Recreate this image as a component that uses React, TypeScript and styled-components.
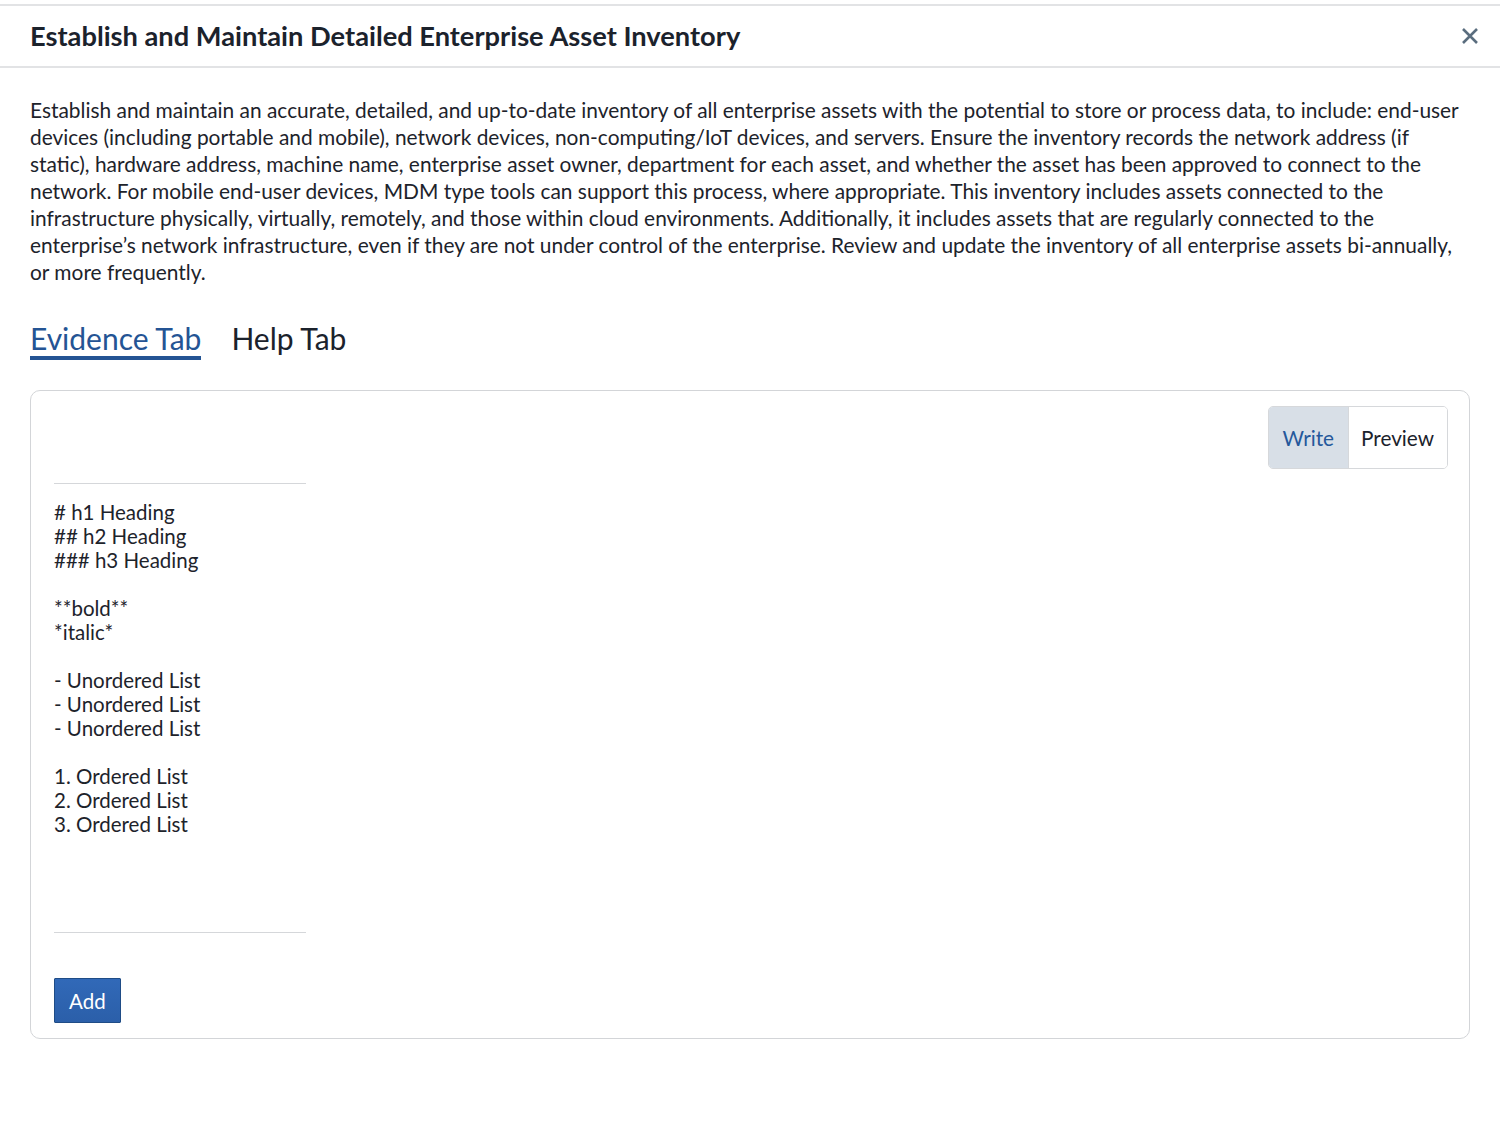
import React, { useState } from 'react';
import styled, { createGlobalStyle } from 'styled-components';

const GlobalStyle = createGlobalStyle`
  html, body {
    margin: 0;
    padding: 0;
    background: #ffffff;
  }
  body {
    font-family: Lato, 'Open Sans', 'Liberation Sans', sans-serif;
    color: #1d232b;
  }
`;

const Page = styled.div`
  width: 1500px;
  padding-top: 4px;
  display: flex;
  flex-direction: column;
`;

const Header = styled.div`
  height: 60px;
  border-top: 2px solid #e2e3e5;
  border-bottom: 2px solid #e2e3e5;
  display: flex;
  align-items: center;
  justify-content: space-between;
  padding: 0 20px 0 30px;
`;

const Title = styled.h1`
  margin: 0 0 2px;
  font-size: 27.25px;
  font-weight: 700;
  color: #1b222c;
`;

const CloseButton = styled.button`
  border: 0;
  background: none;
  padding: 0;
  width: 20px;
  height: 20px;
  display: flex;
  align-items: center;
  justify-content: center;
  cursor: pointer;
`;

const Body = styled.div`
  padding: 28px 30px 0;
`;

const Description = styled.p`
  margin: 0;
  font-size: 20.9px;
  line-height: 27px;
  color: #1d232b;
`;

const TabBar = styled.div`
  display: flex;
  gap: 30px;
  margin-top: 35px;
`;

const Tab = styled.button<{ active: boolean }>`
  border: 0;
  background: none;
  padding: 0;
  font-family: inherit;
  font-size: 30px;
  line-height: 36px;
  color: ${(p) => (p.active ? '#245494' : '#1b222c')};
  border-bottom: 4px solid ${(p) => (p.active ? '#245494' : 'transparent')};
  cursor: pointer;
`;

const Card = styled.div`
  margin-top: 30px;
  border: 1px solid #d3d5d8;
  border-radius: 10px;
  padding: 15px 21px 15px 23px;
  display: flex;
  flex-direction: column;
`;

const ModeSwitch = styled.div`
  align-self: flex-end;
  display: flex;
  height: 61px;
  border: 1px solid #d6d8db;
  border-radius: 5px;
  overflow: hidden;
`;

const ModeButton = styled.button<{ active: boolean }>`
  border: 0;
  font-family: inherit;
  font-size: 20.75px;
  padding: 0 ${(p) => (p.active ? 14 : 13)}px 0 ${(p) => (p.active ? 14 : 12)}px;
  background: ${(p) => (p.active ? '#d8dfe7' : '#ffffff')};
  color: ${(p) => (p.active ? '#25589b' : '#1b222c')};
  border-right: ${(p) => (p.active ? '1px solid #d6d8db' : '0')};
  cursor: pointer;
`;

const Editor = styled.textarea`
  margin-top: 14px;
  width: 252px;
  height: 450px;
  box-sizing: border-box;
  border: 0;
  border-top: 1px solid #d5d7da;
  border-bottom: 1px solid #d5d7da;
  padding: 16px 0 0;
  resize: none;
  outline: none;
  font-family: inherit;
  font-size: 20.5px;
  line-height: 24px;
  color: #1d232b;
  overflow: hidden;
`;

const AddButton = styled.button`
  align-self: flex-start;
  margin-top: 45px;
  height: 45px;
  padding: 0 14px;
  border: 1px solid #1f4c86;
  border-radius: 1px;
  background: linear-gradient(#3169b8, #2b5fa9);
  color: #ffffff;
  font-family: inherit;
  font-size: 20.5px;
  cursor: pointer;
`;

const description =
  'Establish and maintain an accurate, detailed, and up-to-date inventory of all enterprise assets with the potential to store or process data, to include: end-user devices (including portable and mobile), network devices, non-computing/IoT devices, and servers. Ensure the inventory records the network address (if static), hardware address, machine name, enterprise asset owner, department for each asset, and whether the asset has been approved to connect to the network. For mobile end-user devices, MDM type tools can support this process, where appropriate. This inventory includes assets connected to the infrastructure physically, virtually, remotely, and those within cloud environments. Additionally, it includes assets that are regularly connected to the enterprise\u2019s network infrastructure, even if they are not under control of the enterprise. Review and update the inventory of all enterprise assets bi-annually, or more frequently.';

const template = [
  '# h1 Heading',
  '## h2 Heading',
  '### h3 Heading',
  '',
  '**bold**',
  '*italic*',
  '',
  '- Unordered List',
  '- Unordered List',
  '- Unordered List',
  '',
  '1. Ordered List',
  '2. Ordered List',
  '3. Ordered List',
].join('\n');

const CloseIcon = () => (
  <svg width="18" height="18" viewBox="0 0 18 18">
    <path d="M2 2 L16 16 M16 2 L2 16" stroke="#5a6d7e" strokeWidth="2.6" />
  </svg>
);

export default function App() {
  const [tab, setTab] = useState<'evidence' | 'help'>('evidence');
  const [mode, setMode] = useState<'write' | 'preview'>('write');
  const [text, setText] = useState(template);

  return (
    <Page>
      <GlobalStyle />
      <Header>
        <Title>Establish and Maintain Detailed Enterprise Asset Inventory</Title>
        <CloseButton aria-label="Close">
          <CloseIcon />
        </CloseButton>
      </Header>
      <Body>
        <Description>{description}</Description>
        <TabBar>
          <Tab active={tab === 'evidence'} onClick={() => setTab('evidence')}>
            Evidence Tab
          </Tab>
          <Tab active={tab === 'help'} onClick={() => setTab('help')}>
            Help Tab
          </Tab>
        </TabBar>
        <Card>
          <ModeSwitch>
            <ModeButton active={mode === 'write'} onClick={() => setMode('write')}>
              Write
            </ModeButton>
            <ModeButton active={mode === 'preview'} onClick={() => setMode('preview')}>
              Preview
            </ModeButton>
          </ModeSwitch>
          <Editor value={text} onChange={(e) => setText(e.target.value)} />
          <AddButton>Add</AddButton>
        </Card>
      </Body>
    </Page>
  );
}
